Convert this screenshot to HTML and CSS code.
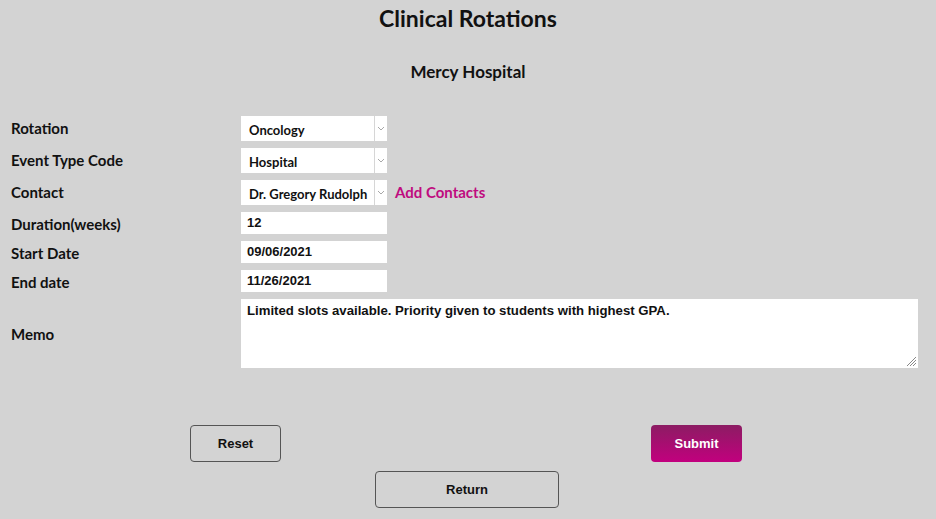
FILE: index.html
```html
<!DOCTYPE html>
<html>
<head>
<meta charset="utf-8">
<link rel="stylesheet" href="styles.css">
</head>
<body>
<div class="page">
  <h1 class="title">Clinical Rotations</h1>
  <h2 class="subtitle">Mercy Hospital</h2>
  <form class="form">
    <div class="row row-select">
      <label class="label">Rotation</label>
      <div class="select"><span class="select-text">Oncology</span><span class="select-arrow"><svg width="8" height="5" viewBox="0 0 8 5"><path d="M1 1l3 3 3-3" fill="none" stroke="#a8a8a8" stroke-width="1"/></svg></span></div>
    </div>
    <div class="row row-select">
      <label class="label">Event Type Code</label>
      <div class="select"><span class="select-text">Hospital</span><span class="select-arrow"><svg width="8" height="5" viewBox="0 0 8 5"><path d="M1 1l3 3 3-3" fill="none" stroke="#a8a8a8" stroke-width="1"/></svg></span></div>
    </div>
    <div class="row row-select">
      <label class="label">Contact</label>
      <div class="select"><span class="select-text">Dr. Gregory Rudolph</span><span class="select-arrow"><svg width="8" height="5" viewBox="0 0 8 5"><path d="M1 1l3 3 3-3" fill="none" stroke="#a8a8a8" stroke-width="1"/></svg></span></div>
      <a class="add-link">Add Contacts</a>
    </div>
    <div class="row row-input">
      <label class="label">Duration(weeks)</label>
      <div class="input">12</div>
    </div>
    <div class="row row-input">
      <label class="label">Start Date</label>
      <div class="input">09/06/2021</div>
    </div>
    <div class="row row-input">
      <label class="label">End date</label>
      <div class="input">11/26/2021</div>
    </div>
    <div class="row row-memo">
      <label class="label">Memo</label>
      <div class="textarea">Limited slots available. Priority given to students with highest GPA.<svg class="grip" width="12" height="12" viewBox="0 0 12 12"><path d="M11 2L2 11M11 5L5 11M11 8L8 11" stroke="#888" stroke-width="1"/></svg></div>
    </div>
    <div class="actions">
      <button type="button" class="btn btn-outline btn-reset">Reset</button>
      <button type="button" class="btn btn-primary">Submit</button>
    </div>
    <div class="actions-return">
      <button type="button" class="btn btn-outline btn-return">Return</button>
    </div>
  </form>
</div>
</body>
</html>
```
FILE: styles.css
```css
html, body {
  margin: 0;
  padding: 0;
  background: #d3d3d3;
}
body {
  width: 936px;
  height: 519px;
  overflow: hidden;
  font-family: "Lato", "Noto Sans", sans-serif;
  color: #111;
}
.page {
  padding: 0 0 0 11px;
}
.title {
  margin: 0;
  padding-top: 5px;
  text-align: center;
  font-size: 23px;
  font-weight: 700;
  line-height: 27px;
  padding-right: 11px;
}
.subtitle {
  margin: 0;
  padding-top: 30px;
  text-align: center;
  font-size: 17px;
  font-weight: 700;
  line-height: 20px;
  padding-right: 11px;
}
.form {
  margin-top: 34px;
}
.row {
  display: flex;
  align-items: center;
}
.label {
  width: 230px;
  flex: none;
  font-size: 15px;
  font-weight: 700;
}
.row-select {
  height: 25px;
  margin-bottom: 7px;
}
.row-select .label {
  align-self: flex-start;
  padding-top: 3px;
}
.select {
  width: 146px;
  height: 25px;
  background: #fff;
  display: flex;
  align-items: center;
  box-sizing: border-box;
}
.select-text {
  flex: 1;
  padding-left: 8px;
  font-size: 13px;
  font-weight: 700;
  white-space: nowrap;
  overflow: hidden;
  padding-top: 2px;
}
.select-arrow {
  width: 12px;
  height: 25px;
  border-left: 1px solid #d6d6d6;
  display: flex;
  align-items: center;
  justify-content: center;
  flex: none;
}
.add-link {
  margin-left: 8px;
  color: #bf0b7f;
  font-size: 15px;
  font-weight: 700;
  text-decoration: none;
  align-self: flex-start;
  padding-top: 3px;
}
.row-input {
  height: 22px;
  margin-bottom: 7px;
}
.row-input .label {
  padding-top: 2px;
}
.input {
  width: 146px;
  height: 22px;
  background: #fff;
  box-sizing: border-box;
  padding-left: 6px;
  font-family: "Liberation Sans", Arial, sans-serif;
  font-size: 13px;
  font-weight: 700;
  line-height: 22px;
}
.row-memo {
  margin-top: 2px;
}
.textarea {
  position: relative;
  width: 677px;
  height: 69px;
  background: #fff;
  box-sizing: border-box;
  padding: 3px 6px;
  font-family: "Liberation Sans", Arial, sans-serif;
  font-size: 13.2px;
  font-weight: 700;
  line-height: 18px;
}
.grip {
  position: absolute;
  right: 1px;
  bottom: 1px;
}
.actions {
  display: grid;
  grid-template-columns: 91px 91px;
  justify-content: space-between;
  margin-top: 57px;
  padding-left: 179px;
  padding-right: 194px;
}
.actions-return {
  display: flex;
  margin-top: 9px;
  padding-left: 364px;
}
.btn {
  height: 37px;
  border-radius: 4px;
  font-family: "Liberation Sans", Arial, sans-serif;
  font-size: 13px;
  font-weight: 700;
  cursor: pointer;
  padding: 0;
}
.btn-outline {
  background: transparent;
  border: 1px solid #555;
  color: #111;
}
.btn-primary {
  border: none;
  color: #fff;
  background: linear-gradient(to bottom, #8c1c63, #c2007e);
}
.btn-return {
  width: 184px;
}
```
